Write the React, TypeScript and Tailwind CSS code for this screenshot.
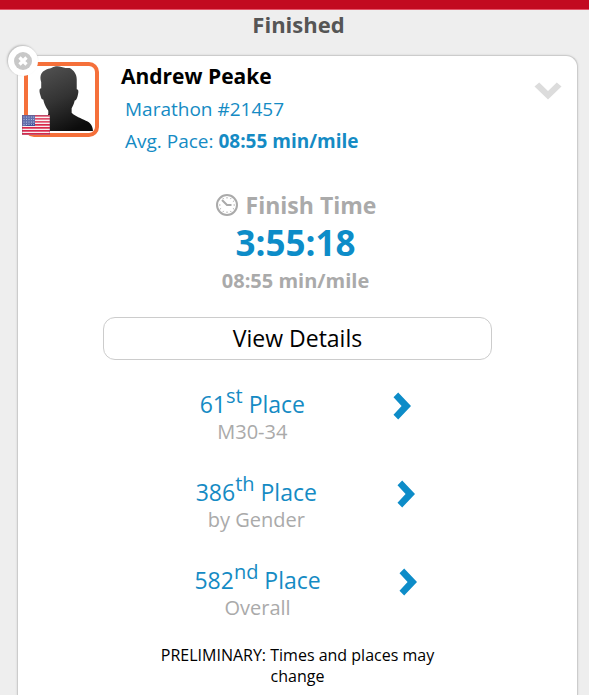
import type { ReactNode } from "react";

type Placing = {
  rank: number;
  suffix: string;
  group: string;
};

const placings: Placing[] = [
  { rank: 61, suffix: "st", group: "M30-34" },
  { rank: 386, suffix: "th", group: "by Gender" },
  { rank: 582, suffix: "nd", group: "Overall" },
];

function UsFlag() {
  return (
    <svg viewBox="0 0 28 20" className="h-5 w-7" role="img" aria-label="United States">
      <rect width="28" height="20" fill="#f6eef0" />
      {[0, 3, 6, 9, 12, 15, 18].map((y) => (
        <rect key={y} y={y} width="28" height="1.7" fill="#d9284a" />
      ))}
      <rect width="13" height="11" fill="#41519b" />
      {[2, 4.5, 7, 9.5].map((y) =>
        [2, 4.5, 7, 9.5, 11.7].map((x) => <circle key={`${x}-${y}`} cx={x} cy={y} r="0.5" fill="#c3c9e6" />),
      )}
      <path d="M0 0h28v9Q14 6 0 12z" fill="#fff" opacity="0.18" />
      <rect x="0.5" y="0.5" width="27" height="19" fill="none" stroke="#7a3b5c" strokeOpacity="0.3" />
    </svg>
  );
}

function Silhouette() {
  return (
    <svg viewBox="0 0 66 66" className="size-full" aria-hidden="true">
      <defs>
        <linearGradient id="silhouette" x1="0.2" y1="0" x2="0.6" y2="1">
          <stop offset="0" stopColor="#505050" />
          <stop offset="0.5" stopColor="#333" />
          <stop offset="1" stopColor="#0c0c0c" />
        </linearGradient>
      </defs>
      <path
        fill="url(#silhouette)"
        d="M13 8C15 4 19 3 23 2C26 0 30 0 33 1L37 2L41 2C45 4 48 8 48 13L48 23C50 23 50 26 49 29C48 33 47 34 46 34C45 39 43 41 43 42L43 46C47 50 52 51 57 54C62 56 64 60 64 64H10C14 60 18 53 20 47L20 44C17 40 16 37 15 33C13 33 13 31 12 28C11 25 11 22 13 22L13 16C12 13 12 10 13 8Z"
      />
    </svg>
  );
}

function ClockIcon() {
  return (
    <svg viewBox="0 0 24 24" className="size-6" fill="none" stroke="#aaa" aria-hidden="true">
      <circle cx="12" cy="12" r="10" strokeWidth="2" />
      <path
        d="M12 4v1.500M12 18.500v1.500M4 12h1.500M18.500 12H20M8 5.100l.6 1M16 18.900l-.6-1M5.100 16l1-.6M18.900 8l-1 .6M8 18.900l.6-1M16 5.100l-.6 1M18.900 16l-1-.6"
        strokeWidth="1"
      />
      <path d="M7 7l5 5h4.500" strokeWidth="2" strokeLinejoin="round" />
    </svg>
  );
}

function ChevronRight() {
  return (
    <svg viewBox="0 0 18 28" className="h-7 w-[18px]" aria-hidden="true">
      <path d="M0.500 5.200L5.200 0.500L18 14L5.200 27.500L0.500 22.800L8.600 14Z" fill="#0d8cc8" />
    </svg>
  );
}

function ChevronDown() {
  return (
    <svg viewBox="0 0 28 18" className="h-[18px] w-7" aria-hidden="true">
      <path d="M5.200 0.500L0.500 4.500L14 17.500L27.500 4.500L22.800 0.500L14 9Z" fill="#dcdcdc" />
    </svg>
  );
}

function InfoLine({ children }: { children: ReactNode }) {
  return <p className="pl-1 text-[19px] leading-8 text-[#158bc4]">{children}</p>;
}

function PlacingRow({ rank, suffix, group }: Placing) {
  return (
    <li className="w-[300px]">
      <a href="#placing" className="flex items-start text-center">
        <span className="block flex-auto">
          <span className="block text-[23px] leading-8 text-[#158bc4]">
            {rank}
            <sup className="text-[20px] leading-none">{suffix}</sup> Place
          </span>
          <span className="block text-[20px] leading-6 text-[#aaa]">{group}</span>
        </span>
        <span className="flex flex-auto justify-center pt-1">
          <ChevronRight />
        </span>
      </a>
    </li>
  );
}

export default function App() {
  return (
    <div className="flex min-h-screen flex-col bg-[#eee] font-['Open_Sans','Noto_Sans',sans-serif]">
      <div className="h-[10px] border-b border-[#e4566a] bg-[#c20a20]" />
      <h1 className="pl-2 text-center text-[22px] leading-7 font-bold text-[#555]">Finished</h1>

      <main className="relative mt-[17px] mr-[11px] ml-[17px] flex-1 rounded-t-xl border border-[#ccc] border-b-0 bg-white pt-[6px] shadow-[0_0_2px_#ccc]">
        <button
          type="button"
          aria-label="Remove runner"
          className="absolute -top-[10px] -left-[10px] z-10 flex size-[30px] items-center justify-center rounded-full bg-white shadow-[-1px_-1px_2px_#bbb]"
        >
          <svg viewBox="0 0 18 18" className="size-[18px]" aria-hidden="true">
            <circle cx="9" cy="9" r="9" fill="#c8c8c8" />
            <path d="M5.500 5.500l7 7M12.500 5.500l-7 7" stroke="#fff" strokeWidth="3.200" />
          </svg>
        </button>

        <header className="flex items-start pr-[15px] pl-[6px]">
          <div className="relative size-[75px] rounded-[10px] border-4 border-[#f5703a] bg-white">
            <Silhouette />
            <span className="absolute -bottom-[2px] -left-[6px]">
              <UsFlag />
            </span>
          </div>
          <div className="ml-[22px] flex-1">
            <h2 className="text-[21px] leading-7 font-bold text-black">Andrew Peake</h2>
            <div className="pt-[3px]">
              <InfoLine>Marathon #21457</InfoLine>
              <InfoLine>
                Avg. Pace: <strong className="font-bold">08:55 min/mile</strong>
              </InfoLine>
            </div>
          </div>
          <button type="button" aria-label="Expand runner" className="mt-5">
            <ChevronDown />
          </button>
        </header>

        <section className="mt-8 flex flex-col items-center pr-1 font-bold text-[#aaa]">
          <h3 className="flex items-center gap-[7px] text-[23px] leading-8">
            <ClockIcon />
            Finish Time
          </h3>
          <p className="text-[35px] leading-[44px] text-[#0d8cc8]">3:55:18</p>
          <p className="text-[20px] leading-8">08:55 min/mile</p>
        </section>

        <div className="px-[85px] pt-5">
          <button
            type="button"
            className="flex h-[43px] w-full items-start justify-center rounded-xl border border-[#ccc] bg-white pt-1 text-[23px] leading-8 text-black"
          >
            View Details
          </button>
        </div>

        <ul className="mt-7 flex flex-col items-center gap-8 pl-4">
          {placings.map((placing) => (
            <PlacingRow key={placing.group} {...placing} />
          ))}
        </ul>

        <p className="mx-auto mt-[25px] max-w-[300px] text-center text-[16px] leading-[21px] text-black">
          PRELIMINARY: Times and places may change
        </p>
      </main>
    </div>
  );
}
